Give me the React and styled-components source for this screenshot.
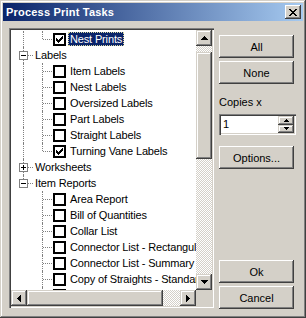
import React from 'react';
import styled, { createGlobalStyle } from 'styled-components';

const FACE = '#d4d0c8';
const SHADOW = '#808080';
const DARK = '#404040';

const GlobalStyle = createGlobalStyle`
  html, body { margin: 0; padding: 0; background: ${FACE}; }
  body {
    font-family: 'Liberation Sans', Arial, sans-serif;
    font-size: 11px;
    color: #000;
  }
`;

const Window = styled.div`
  width: 306px;
  height: 318px;
  box-sizing: border-box;
  padding: 3px;
  background: ${FACE};
  box-shadow: inset -1px -1px ${DARK}, inset 1px 1px ${FACE},
    inset -2px -2px ${SHADOW}, inset 2px 2px #fff;
  display: flex;
  flex-direction: column;
`;

const TitleBar = styled.div`
  height: 18px;
  margin-bottom: 1px;
  padding-left: 3px;
  display: flex;
  align-items: center;
  justify-content: space-between;
  background: linear-gradient(to right, #0a246a, #a6caf0);
  color: #fff;
  font-weight: bold;
  letter-spacing: 0.2px;
`;

const CloseButton = styled.div`
  width: 16px;
  height: 14px;
  margin-right: 2px;
  display: flex;
  align-items: center;
  justify-content: center;
  background: ${FACE};
  box-shadow: inset -1px -1px ${DARK}, inset 1px 1px #fff,
    inset -2px -2px ${SHADOW}, inset 2px 2px ${FACE};
`;

const Client = styled.div`
  flex: 1;
  display: flex;
  padding: 6px 0 0 6px;
`;

const Tree = styled.div`
  width: 205px;
  height: 280px;
  box-sizing: border-box;
  padding: 2px;
  display: grid;
  grid-template-columns: 1fr 16px;
  grid-template-rows: 1fr 16px;
  background: ${FACE};
  box-shadow: inset 1px 1px ${SHADOW}, inset 2px 2px ${DARK},
    inset -1px -1px #fff, inset -2px -2px ${FACE};
`;

const TreeBody = styled.div`
  overflow: hidden;
  background: #fff;
  padding: 1px 0 0 3px;
  letter-spacing: -0.15px;
`;

const Row = styled.div`
  height: 16px;
  display: flex;
  align-items: center;
  white-space: nowrap;
`;

const Guide = styled.span`
  position: relative;
  flex: none;
  width: 19px;
  height: 16px;

  &::before {
    content: '';
    position: absolute;
    left: 9px;
    top: 0;
    height: ${({ $kind }) =>
      $kind === 'none' ? '0' : $kind === 'last' ? '8px' : '16px'};
    border-left: ${({ $kind }) => ($kind === 'none' ? '0' : `1px dotted ${SHADOW}`)};
  }

  &::after {
    content: '';
    display: ${({ $kind }) => ($kind === 'tee' || $kind === 'last' ? 'block' : 'none')};
    position: absolute;
    left: 10px;
    right: 0;
    top: 8px;
    border-top: 1px dotted ${SHADOW};
  }
`;

const ExpandBox = styled.span`
  position: absolute;
  z-index: 1;
  left: 5px;
  top: 4px;
  width: 9px;
  height: 9px;
  box-sizing: border-box;
  border: 1px solid ${SHADOW};
  background: #fff;
  display: flex;
  align-items: center;
  justify-content: center;
`;

const CheckBox = styled.span`
  flex: none;
  width: 13px;
  height: 13px;
  box-sizing: border-box;
  margin-left: 1px;
  border: 2px solid #000;
  background: #fff;
  display: flex;
  align-items: center;
  justify-content: center;
`;

const Label = styled.span`
  height: 14px;
  line-height: 14px;
  box-sizing: border-box;
  padding: 0 2px;
  margin-left: ${({ $indented }) => ($indented ? '2px' : '0')};
  background: ${({ $selected }) => ($selected ? '#0a246a' : 'transparent')};
  color: ${({ $selected }) => ($selected ? '#fff' : '#000')};
  outline: ${({ $selected }) => ($selected ? '1px dotted #d8d8a0' : 'none')};
  outline-offset: -1px;
`;

const VScroll = styled.div`
  display: flex;
  flex-direction: column;
`;

const HScroll = styled.div`
  display: flex;
`;

const Corner = styled.div`
  background: ${FACE};
`;

const ArrowButton = styled.div`
  flex: none;
  width: 16px;
  height: 16px;
  display: flex;
  align-items: center;
  justify-content: center;
  background: ${FACE};
  box-shadow: inset -1px -1px ${DARK}, inset 1px 1px ${FACE},
    inset -2px -2px ${SHADOW}, inset 2px 2px #fff;
`;

const Track = styled.div`
  flex: 1;
  display: flex;
  flex-direction: ${({ $vertical }) => ($vertical ? 'column' : 'row')};
  background-color: #fff;
  background-image: conic-gradient(${FACE} 25%, #fff 0 50%, ${FACE} 0 75%, #fff 0);
  background-size: 2px 2px;
`;

const Thumb = styled.div`
  flex: none;
  background: ${FACE};
  box-shadow: inset -1px -1px ${DARK}, inset 1px 1px ${FACE},
    inset -2px -2px ${SHADOW}, inset 2px 2px #fff;
`;

const Side = styled.div`
  width: 77px;
  margin-left: 5px;
  padding: 7px 0 3px;
  display: flex;
  flex-direction: column;
`;

const Button = styled.div`
  width: 75px;
  height: 23px;
  margin-bottom: 3px;
  margin-top: ${({ $push }) => ($push ? 'auto' : '0')};
  display: flex;
  align-items: center;
  justify-content: center;
  background: ${FACE};
  box-shadow: inset -1px -1px ${DARK}, inset 1px 1px #fff,
    inset -2px -2px ${SHADOW}, inset 2px 2px ${FACE};
`;

const FieldLabel = styled.div`
  margin-top: 9px;
  height: 13px;
  line-height: 13px;
`;

const SpinField = styled.div`
  margin-top: 5px;
  width: 77px;
  height: 21px;
  box-sizing: border-box;
  padding: 2px;
  display: flex;
  align-items: stretch;
  background: #fff;
  box-shadow: inset 1px 1px ${SHADOW}, inset 2px 2px ${DARK},
    inset -1px -1px #fff, inset -2px -2px ${FACE};
`;

const SpinValue = styled.div`
  flex: 1;
  padding-left: 2px;
  line-height: 17px;
`;

const SpinButtons = styled.div`
  width: 16px;
  display: flex;
  flex-direction: column;
`;

const SpinButton = styled(ArrowButton)`
  height: auto;
  flex: 1;
`;

const OptionsButton = styled(Button)`
  margin-top: 11px;
`;

const ArrowUp = () => (
  <svg width="7" height="4" viewBox="0 0 7 4">
    <path d="M3 0h1v1H3zM2 1h3v1H2zM1 2h5v1H1zM0 3h7v1H0z" fill="#000" />
  </svg>
);

const ArrowDown = () => (
  <svg width="7" height="4" viewBox="0 0 7 4">
    <path d="M0 0h7v1H0zM1 1h5v1H1zM2 2h3v1H2zM3 3h1v1H3z" fill="#000" />
  </svg>
);

const ArrowLeft = () => (
  <svg width="4" height="7" viewBox="0 0 4 7">
    <path d="M0 3h1v1H0zM1 2h1v3H1zM2 1h1v5H2zM3 0h1v7H3z" fill="#000" />
  </svg>
);

const ArrowRight = () => (
  <svg width="4" height="7" viewBox="0 0 4 7">
    <path d="M0 0h1v7H0zM1 1h1v5H1zM2 2h1v3H2zM3 3h1v1H3z" fill="#000" />
  </svg>
);

const SmallUp = () => (
  <svg width="5" height="3" viewBox="0 0 5 3">
    <path d="M2 0h1v1H2zM1 1h3v1H1zM0 2h5v1H0z" fill="#000" />
  </svg>
);

const SmallDown = () => (
  <svg width="5" height="3" viewBox="0 0 5 3">
    <path d="M0 0h5v1H0zM1 1h3v1H1zM2 2h1v1H2z" fill="#000" />
  </svg>
);

const CloseGlyph = () => (
  <svg width="8" height="7" viewBox="0 0 8 7">
    <path
      d="M0 0h2v1H0zM6 0h2v1H6zM1 1h2v1H1zM5 1h2v1H5zM2 2h4v1H2zM3 3h2v1H3zM2 4h4v1H2zM1 5h2v1H1zM5 5h2v1H5zM0 6h2v1H0zM6 6h2v1H6z"
      fill="#000"
    />
  </svg>
);

const CheckGlyph = () => (
  <svg width="7" height="7" viewBox="0 0 7 7">
    <path
      d="M6 0h1v1H6zM5 1h2v1H5zM0 2h1v1H0zM4 2h3v1H4zM0 3h2v1H0zM3 3h3v1H3zM0 4h5v1H0zM1 5h3v1H1zM2 6h1v1H2z"
      fill="#000"
    />
  </svg>
);

const ExpandGlyph = ({ open }) => (
  <svg width="5" height="5" viewBox="0 0 5 5">
    <path d={open ? 'M0 2h5v1H0z' : 'M0 2h5v1H0zM2 0h1v5H2z'} fill="#000" />
  </svg>
);

const rows = [
  { guides: ['full', 'last'], check: true, label: 'Nest Prints', selected: true },
  { guides: ['tee'], expand: 'open', label: 'Labels' },
  { guides: ['full', 'tee'], check: false, label: 'Item Labels' },
  { guides: ['full', 'tee'], check: false, label: 'Nest Labels' },
  { guides: ['full', 'tee'], check: false, label: 'Oversized Labels' },
  { guides: ['full', 'tee'], check: false, label: 'Part Labels' },
  { guides: ['full', 'tee'], check: false, label: 'Straight Labels' },
  { guides: ['full', 'last'], check: true, label: 'Turning Vane Labels' },
  { guides: ['tee'], expand: 'closed', label: 'Worksheets' },
  { guides: ['last'], expand: 'open', label: 'Item Reports' },
  { guides: ['none', 'tee'], check: false, label: 'Area Report' },
  { guides: ['none', 'tee'], check: false, label: 'Bill of Quantities' },
  { guides: ['none', 'tee'], check: false, label: 'Collar List' },
  { guides: ['none', 'tee'], check: false, label: 'Connector List - Rectangular' },
  { guides: ['none', 'tee'], check: false, label: 'Connector List - Summary' },
  { guides: ['none', 'tee'], check: false, label: 'Copy of Straights - Standard' },
  { guides: ['none', 'tee'], check: false, label: 'Duct Fittings List' },
];

const TreeRow = ({ row }) => (
  <Row>
    {row.guides.map((kind, i) => (
      <Guide key={i} $kind={kind}>
        {row.expand && i === row.guides.length - 1 && (
          <ExpandBox>
            <ExpandGlyph open={row.expand === 'open'} />
          </ExpandBox>
        )}
      </Guide>
    ))}
    {row.check !== undefined && <CheckBox>{row.check && <CheckGlyph />}</CheckBox>}
    <Label $selected={row.selected} $indented={row.check !== undefined}>
      {row.label}
    </Label>
  </Row>
);

const App = () => (
  <>
    <GlobalStyle />
    <Window>
      <TitleBar>
        <span>Process Print Tasks</span>
        <CloseButton>
          <CloseGlyph />
        </CloseButton>
      </TitleBar>
      <Client>
        <Tree>
          <TreeBody>
            {rows.map((row) => (
              <TreeRow key={row.label} row={row} />
            ))}
          </TreeBody>
          <VScroll>
            <ArrowButton>
              <ArrowUp />
            </ArrowButton>
            <Track $vertical>
              <Thumb style={{ marginTop: 6, height: 107 }} />
            </Track>
            <ArrowButton>
              <ArrowDown />
            </ArrowButton>
          </VScroll>
          <HScroll>
            <ArrowButton>
              <ArrowLeft />
            </ArrowButton>
            <Track>
              <Thumb style={{ width: 136 }} />
            </Track>
            <ArrowButton>
              <ArrowRight />
            </ArrowButton>
          </HScroll>
          <Corner />
        </Tree>
        <Side>
          <Button>All</Button>
          <Button>None</Button>
          <FieldLabel>Copies x</FieldLabel>
          <SpinField>
            <SpinValue>1</SpinValue>
            <SpinButtons>
              <SpinButton>
                <SmallUp />
              </SpinButton>
              <SpinButton>
                <SmallDown />
              </SpinButton>
            </SpinButtons>
          </SpinField>
          <OptionsButton>Options...</OptionsButton>
          <Button $push>Ok</Button>
          <Button>Cancel</Button>
        </Side>
      </Client>
    </Window>
  </>
);

export default App;
